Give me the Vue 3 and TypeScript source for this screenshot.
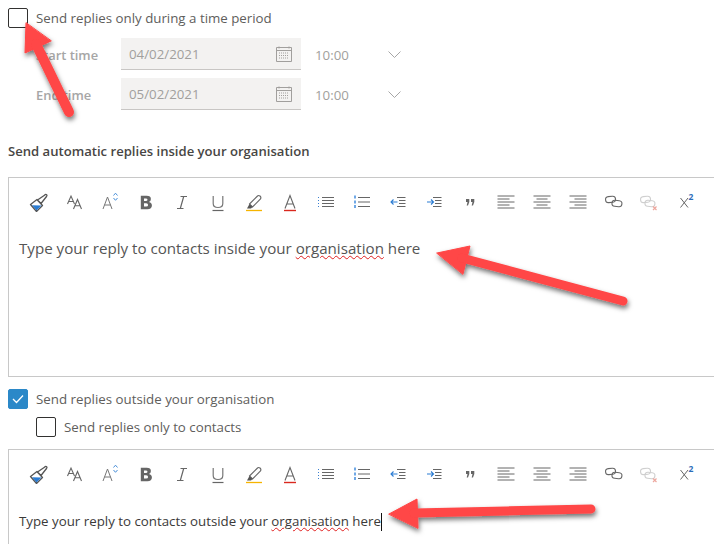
<script setup lang="ts">
const tools = ['brush', 'size', 'grow', 'bold', 'italic', 'under', 'hilite', 'color', 'bullets', 'numbers', 'outdent', 'indent', 'quote', 'left', 'center', 'right', 'link', 'unlink', 'sup']

const times = [
  { label: 'Start time', date: '04/02/2021' },
  { label: 'End time', date: '05/02/2021' }
]
</script>

<template>
  <div class="page">
    <svg class="defs" width="0" height="0">
      <symbol id="brush" viewBox="0 0 20 20">
        <path d="M1.500 12.500 8 7.500l5.500 6-6 6z" fill="#fff" stroke="#555" stroke-width="1.300" stroke-linejoin="round" />
        <path d="M3 13.200 12.500 13.400 7.500 18.500z" fill="#2b7cd3" />
        <path d="M8.500 8 12 11.500l5.500-7q1-1.500-.2-2-1-.3-1.800.8z" fill="#fff" stroke="#555" stroke-width="1.300" stroke-linejoin="round" />
      </symbol>
      <symbol id="size" viewBox="0 0 20 20">
        <path d="M3.500 12 7 4l3.500 8M4.700 9.500h4.600M9.500 17 13.500 7.500l4 9.500M11 13.800h5" fill="none" stroke="#666" stroke-width="1.100" />
      </symbol>
      <symbol id="grow" viewBox="0 0 20 20">
        <path d="M3 17 7.500 5 12 17M4.500 13h6" fill="none" stroke="#777" stroke-width="1" />
        <path d="M13.500 3.500 15.500 1.200l2 2.300M13.500 6l2 2.300 2-2.300" fill="none" stroke="#4a90d9" stroke-width="1" />
      </symbol>
      <symbol id="bold" viewBox="0 0 20 20">
        <path d="M4.800 3.800h5.900q4.200 0 4.200 3.300 0 2.300-2 3 3 .6 3 3.400 0 3.700-4.500 3.700H4.800zM8 6.400v2.600h1.800q1.700 0 1.700-1.300 0-1.300-1.700-1.300zM8 11.300v3.300h2.100q2 0 2-1.700 0-1.600-2-1.600z" fill="#666" fill-rule="evenodd" />
      </symbol>
      <symbol id="italic" viewBox="0 0 20 20">
        <path d="M8.500 4.500h6.500M5 16.500h6.500M11.700 4.500 8.300 16.500" fill="none" stroke="#666" stroke-width="1.200" />
      </symbol>
      <symbol id="under" viewBox="0 0 20 20">
        <path d="M5.200 4v7.500q0 4 4.800 4t4.800-4V4" fill="none" stroke="#777" stroke-width="1.200" />
        <path d="M4.500 18.500h11" stroke="#666" stroke-width="1.200" />
      </symbol>
      <symbol id="hilite" viewBox="0 0 20 20">
        <path d="M5.500 12 13.500 4q1-1 2.500 0 1.500 1.500.5 3l-8 8z" fill="#fff" stroke="#666" stroke-width="1.100" />
        <path d="M5.500 12l3 3-1.500 1.500H3z" fill="#555" />
        <path d="M2 18.500h16" stroke="#f6b400" stroke-width="1.300" />
      </symbol>
      <symbol id="color" viewBox="0 0 20 20">
        <path d="M5 16.500 10 3.500l5 13M6.800 12h6.400" fill="none" stroke="#666" stroke-width="1.100" />
        <path d="M4 18.500h12" stroke="#d9281e" stroke-width="1.400" />
      </symbol>
      <symbol id="bullets" viewBox="0 0 20 20">
        <path d="M6 5.500h12M6 8.500h12M6 11.500h12M6 14.500h12" stroke="#666" stroke-width="1" />
        <path d="M2 5h1v1H2zM2 8h1v1H2zM2 11h1v1H2zM2 14h1v1H2z" fill="#3a7fd0" />
      </symbol>
      <symbol id="numbers" viewBox="0 0 20 20">
        <path d="M6 5.500h12M6 10h12M6 14.500h12" stroke="#666" stroke-width="1" />
        <path d="M2 3.500h2v3H2zM2 8.500h2v3H2zM2 13h2v3H2z" fill="#6fa8e6" />
      </symbol>
      <symbol id="outdent" viewBox="0 0 20 20">
        <path d="M9 5.500h8.500M11 8.500h6.500M11 11.500h6.500M9 14.500h8.500" stroke="#666" stroke-width="1" />
        <path d="M9.500 10H3M5.500 7.500 3 10l2.500 2.500" fill="none" stroke="#2b7cd3" stroke-width="1.100" />
      </symbol>
      <symbol id="indent" viewBox="0 0 20 20">
        <path d="M9 5.500h8.500M11 8.500h6.500M11 11.500h6.500M9 14.500h8.500" stroke="#666" stroke-width="1" />
        <path d="M3 10h6.500M7 7.500 9.500 10 7 12.500" fill="none" stroke="#2b7cd3" stroke-width="1.100" />
      </symbol>
      <symbol id="quote" viewBox="0 0 20 20">
        <path d="M6 7h3.300v3L8 13.500H6.700l.8-3.500H6zM11 7h3.300v3L13 13.500h-1.300l.8-3.500H11z" fill="#666" />
      </symbol>
      <symbol id="left" viewBox="0 0 20 20">
        <path d="M1.500 4h17M1.500 7h12M1.500 10h17M1.500 13h12M1.500 16h17" stroke="#666" stroke-width="1" />
      </symbol>
      <symbol id="center" viewBox="0 0 20 20">
        <path d="M1.500 4h17M4.500 7h11M1.500 10h17M4.500 13h11M1.500 16h17" stroke="#666" stroke-width="1" />
      </symbol>
      <symbol id="right" viewBox="0 0 20 20">
        <path d="M1.500 4h17M6.500 7h12M1.500 10h17M6.500 13h12M1.500 16h17" stroke="#666" stroke-width="1" />
      </symbol>
      <symbol id="link" viewBox="0 0 20 20">
        <rect x="1.500" y="4.500" width="10" height="6" rx="3" transform="rotate(-6 6 7)" fill="none" stroke="#666" stroke-width="1.100" />
        <rect x="8" y="8.500" width="10" height="6" rx="3" transform="rotate(6 13 11)" fill="none" stroke="#666" stroke-width="1.100" />
      </symbol>
      <symbol id="unlink" viewBox="0 0 20 20">
        <rect x="1.500" y="4.500" width="10" height="6" rx="3" transform="rotate(-6 6 7)" fill="none" stroke="#cfcfcf" stroke-width="1.100" />
        <rect x="6" y="8.500" width="10" height="6" rx="3" transform="rotate(6 11 11)" fill="none" stroke="#cfcfcf" stroke-width="1.100" />
        <path d="M14 14.500l3.500 3.500M17.500 14.500 14 18" stroke="#eda79e" stroke-width="1.200" />
      </symbol>
      <symbol id="sup" viewBox="0 0 20 20">
        <path d="M5.500 6 13 15.500M13 6 5.500 15.500" stroke="#666" stroke-width="1" />
        <text x="13.500" y="7.500" font-size="8.500" font-weight="700" font-family="Open Sans, sans-serif" fill="#2b6cb8">2</text>
      </symbol>
    </svg>

    <label class="check">
      <span class="box"></span>
      <span>Send replies only during a time period</span>
    </label>

    <div class="times">
      <div v-for="t in times" :key="t.label" class="time-row">
        <span class="time-label">{{ t.label }}</span>
        <div class="date-input">
          <span>{{ t.date }}</span>
          <svg class="cal" width="16" height="16" viewBox="0 0 16 16">
            <path d="M.5 1.500h15v14H.5zM.5 4.500h15" fill="none" stroke="#a19f9d" />
            <path d="M3 .5v2M13 .5v2" stroke="#a19f9d" />
            <path d="M3 7h10M3 9.500h10M3 12h10" stroke="#a19f9d" stroke-dasharray="1 1" />
          </svg>
        </div>
        <span class="time-value">10:00</span>
        <svg class="chev" width="13" height="7" viewBox="0 0 13 7">
          <path d="M.5.500l6 6 6-6" fill="none" stroke="#a6a6a6" />
        </svg>
      </div>
    </div>

    <h2 class="heading">Send automatic replies inside your organisation</h2>

    <div class="editor editor-inside">
      <div class="toolbar">
        <svg v-for="id in tools" :key="id" class="tool" width="20" height="20"><use :href="'#' + id" /></svg>
      </div>
      <p class="body-text">Type your reply to contacts inside your <span class="spell">organisation</span> here</p>
    </div>

    <label class="check check-outside">
      <span class="box box-on">
        <svg width="12" height="10" viewBox="0 0 12 10"><path d="M1 5l3.500 3.500L11 1.500" fill="none" stroke="#fff" stroke-width="1.300" /></svg>
      </span>
      <span>Send replies outside your organisation</span>
    </label>
    <label class="check check-contacts">
      <span class="box"></span>
      <span>Send replies only to contacts</span>
    </label>

    <div class="editor editor-outside">
      <div class="toolbar">
        <svg v-for="id in tools" :key="'b' + id" class="tool" width="20" height="20"><use :href="'#' + id" /></svg>
      </div>
      <p class="body-text dark">Type your reply to contacts outside your <span class="spell">organisation</span> here<span class="caret"></span></p>
    </div>

    <svg class="arrows" width="714" height="544" viewBox="0 0 714 544">
      <defs>
        <filter id="shadow" x="-20%" y="-20%" width="140%" height="140%">
          <feDropShadow dx="1" dy="3" stdDeviation="2.500" flood-color="#000" flood-opacity="0.55" />
        </filter>
      </defs>
      <g fill="#ff4646" stroke="#ff4646" stroke-linecap="round" filter="url(#shadow)">
        <path d="M26 23 25 53 51 41z" stroke-width="1" />
        <path d="M36 44 69 112" stroke-width="10" />
        <path d="M437 253 470 246 463 274z" stroke-width="1" />
        <path d="M462 258 623 301" stroke-width="9" />
        <path d="M389 514 417 499 418 528z" stroke-width="1" />
        <path d="M414 513 591 509" stroke-width="9" />
      </g>
    </svg>
  </div>
</template>

<style scoped>
.page {
  position: relative;
  width: 714px;
  height: 544px;
  overflow: hidden;
  background: #fff;
  padding: 8px 0 0 8px;
  box-sizing: border-box;
  font-family: "Open Sans", "Liberation Sans", sans-serif;
  font-size: 13.3px;
  color: #605e5c;
}

.defs {
  position: absolute;
}

.check {
  display: flex;
  align-items: center;
  gap: 8px;
  height: 20px;
}

.box {
  width: 20px;
  height: 20px;
  box-sizing: border-box;
  border: 1px solid #323130;
  border-radius: 2px;
  display: flex;
  align-items: center;
  justify-content: center;
  flex: none;
}

.box-on {
  background: #2b88c8;
  border-color: #2b88c8;
}

.times {
  margin-top: 10px;
  display: flex;
  flex-direction: column;
  gap: 8px;
}

.time-row {
  display: flex;
  align-items: center;
  height: 32px;
  padding-left: 28px;
}

.time-label {
  width: 85px;
  font-weight: 600;
  color: #a6a6a6;
  font-size: 12.9px;
  padding-top: 2px;
}

.date-input {
  width: 180px;
  height: 32px;
  box-sizing: border-box;
  background: #f3f2f1;
  border-bottom: 1px solid #c8c6c4;
  display: flex;
  align-items: center;
  justify-content: space-between;
  padding: 0 9px 0 8px;
  color: #a19f9d;
}

.time-value {
  margin-left: 14px;
  width: 73px;
  color: #a19f9d;
  font-size: 13.3px;
  padding-top: 1px;
}

.chev {
  margin-top: 1px;
}

.heading {
  margin: 32px 0 0;
  font-size: 13.1px;
  font-weight: 600;
  line-height: 18px;
  color: #484644;
}

.editor {
  width: 730px;
  box-sizing: border-box;
  border: 1.5px solid #c8c8c8;
  padding: 14px 0 0 10px;
}

.editor-inside {
  margin-top: 17px;
  height: 200px;
}

.editor-outside {
  margin-top: 12px;
  height: 110px;
}

.toolbar {
  display: flex;
  gap: 15.94px;
  padding-left: 9.5px;
}

.tool {
  flex: none;
}

.body-text {
  margin: 26px 0 0;
  font-size: 15.15px;
  line-height: 20px;
  color: #555;
}

.editor-outside .body-text {
  margin-top: 27px;
}

.dark {
  font-size: 13.3px;
  color: #3b3a39;
}

.spell {
  text-decoration: underline wavy #e02020 1px;
  text-underline-offset: 1px;
}

.caret {
  display: inline-block;
  width: 1px;
  height: 18px;
  background: #111;
  vertical-align: -5px;
}

.check-outside {
  margin-top: 12px;
}

.check-contacts {
  margin: 8px 0 0 28px;
}

.arrows {
  position: absolute;
  left: 0;
  top: 0;
  pointer-events: none;
}
</style>
